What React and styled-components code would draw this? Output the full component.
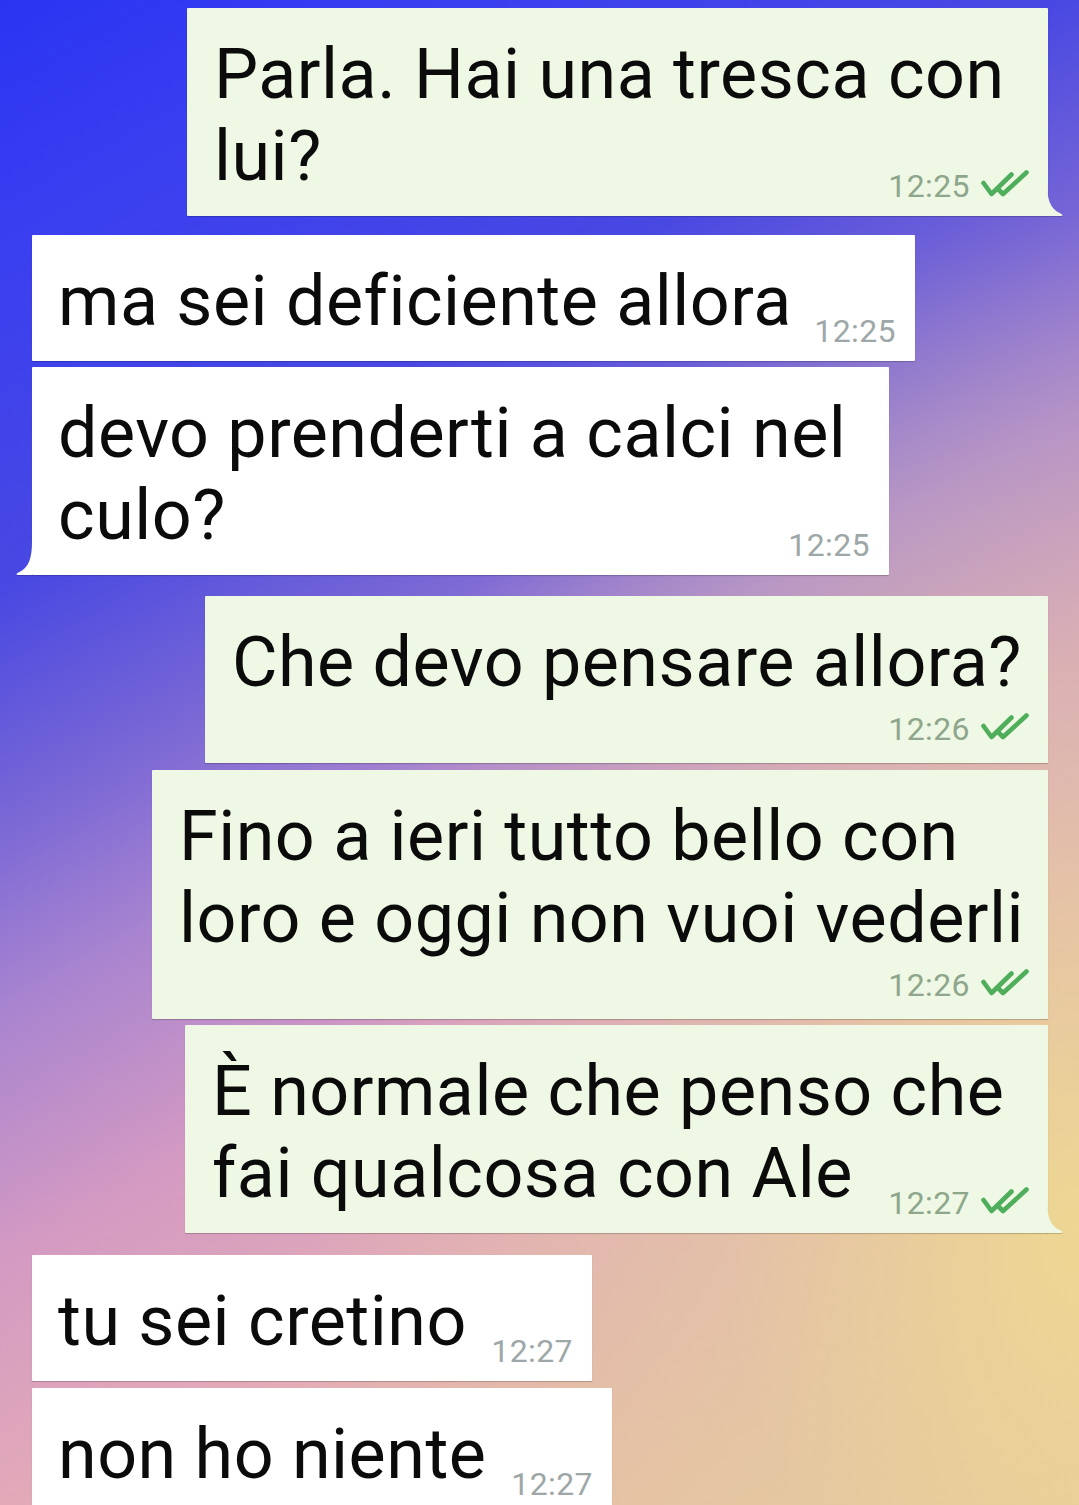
import React from "react";
import styled, { createGlobalStyle } from "styled-components";

const GlobalStyle = createGlobalStyle`
  html, body { margin: 0; padding: 0; }
  body { font-family: Roboto, "Liberation Sans", sans-serif; }
`;

const Screen = styled.div`
  width: 1079px;
  height: 1505px;
  overflow: hidden;
  box-sizing: border-box;
  padding: 8px 31px 0 32px;
  display: flex;
  flex-direction: column;
  background:
    radial-gradient(ellipse 72% 68% at 100% 82%, rgba(238, 216, 146, 0.95) 0%, rgba(226, 200, 164, 0.6) 45%, rgba(226, 200, 164, 0) 100%),
    linear-gradient(151deg, #2a34f2 0%, #3a3ff0 12%, #4848e2 28%, #7464d6 38%, #a884d0 48%, #d49ac2 60%, #e2aab8 72%, #ecd092 100%);
`;

const Bubble = styled.div`
  position: relative;
  box-sizing: border-box;
  width: ${(p) => p.$w}px;
  align-self: ${(p) => (p.$out ? "flex-end" : "flex-start")};
  margin-top: ${(p) => p.$gap}px;
  padding: 25px 19px 19px ${(p) => (p.$out ? 27 : 26)}px;
  background: ${(p) => (p.$out ? "#eef8e4" : "#ffffff")};
  box-shadow: 0 1px 1px rgba(0, 0, 0, 0.22);
  border-radius: 1px;
  display: grid;
  flex-shrink: 0;
`;

const Text = styled.div`
  grid-area: 1 / 1;
  font-size: 70px;
  line-height: 82px;
  letter-spacing: 0.5px;
  color: #0b0b0b;
  white-space: nowrap;
`;

const Line = styled.div``;

const Meta = styled.div`
  grid-area: ${(p) => (p.$below ? "2 / 1" : "1 / 1")};
  justify-self: end;
  align-self: end;
  display: flex;
  align-items: flex-start;
  gap: 11px;
  height: 32px;
  margin: ${(p) => (p.$below ? "10px 0 -1px" : "0 0 -5px")};
  font-size: 32px;
  line-height: 32px;
  letter-spacing: 0.4px;
  color: ${(p) => (p.$out ? "#8ea68c" : "#9ea7a7")};
`;

const Ticks = styled.svg`
  width: 48px;
  height: 28px;
  flex-shrink: 0;
`;

const Tail = styled.svg`
  position: absolute;
  bottom: 0;
  width: 16px;
  height: 34px;
  ${(p) => (p.$out ? "right: -15px;" : "left: -16px; transform: scaleX(-1);")}
  filter: drop-shadow(0 1px 0.5px rgba(0, 0, 0, 0.18));
`;

const messages = [
  { out: true, w: 861, gap: 0, lines: ["Parla. Hai una tresca con", "lui?"], time: "12:25", tail: true },
  { out: false, w: 883, gap: 19, lines: ["ma sei deficiente allora"], time: "12:25" },
  { out: false, w: 857, gap: 6, lines: ["devo prenderti a calci nel", "culo?"], time: "12:25", tail: true },
  { out: true, w: 843, gap: 21, lines: ["Che devo pensare allora?"], time: "12:26", below: true },
  { out: true, w: 896, gap: 7, lines: ["Fino a ieri tutto bello con", "loro e oggi non vuoi vederli"], time: "12:26", below: true },
  { out: true, w: 863, gap: 6, lines: ["È normale che penso che", "fai qualcosa con Ale"], time: "12:27", tail: true },
  { out: false, w: 560, gap: 22, lines: ["tu sei cretino"], time: "12:27" },
  { out: false, w: 580, gap: 7, lines: ["non ho niente"], time: "12:27" },
];

const Message = ({ m }) => (
  <Bubble $out={m.out} $w={m.w} $gap={m.gap}>
    <Text>
      {m.lines.map((l, i) => (
        <Line key={i}>{l}</Line>
      ))}
    </Text>
    <Meta $out={m.out} $below={m.below}>
      <span>{m.time}</span>
      {m.out && (
        <Ticks viewBox="0 0 48 28" fill="none" stroke="#4fae5c" strokeWidth="4.6" strokeLinecap="round" strokeLinejoin="round">
          <path d="M2.5 13 L10.5 24 L30.5 4.5" />
          <path d="M17 19 L22 24 L45.5 2.5" />
        </Ticks>
      )}
    </Meta>
    {m.tail && (
      <Tail $out={m.out} viewBox="0 0 16 34">
        <path d="M0 0 C0 17 3 27 13.5 31.6 C16 32.6 16 34 14 34 L0 34 Z" fill={m.out ? "#eef8e4" : "#ffffff"} />
      </Tail>
    )}
  </Bubble>
);

const App = () => (
  <>
    <GlobalStyle />
    <Screen>
      {messages.map((m, i) => (
        <Message key={i} m={m} />
      ))}
    </Screen>
  </>
);

export default App;
